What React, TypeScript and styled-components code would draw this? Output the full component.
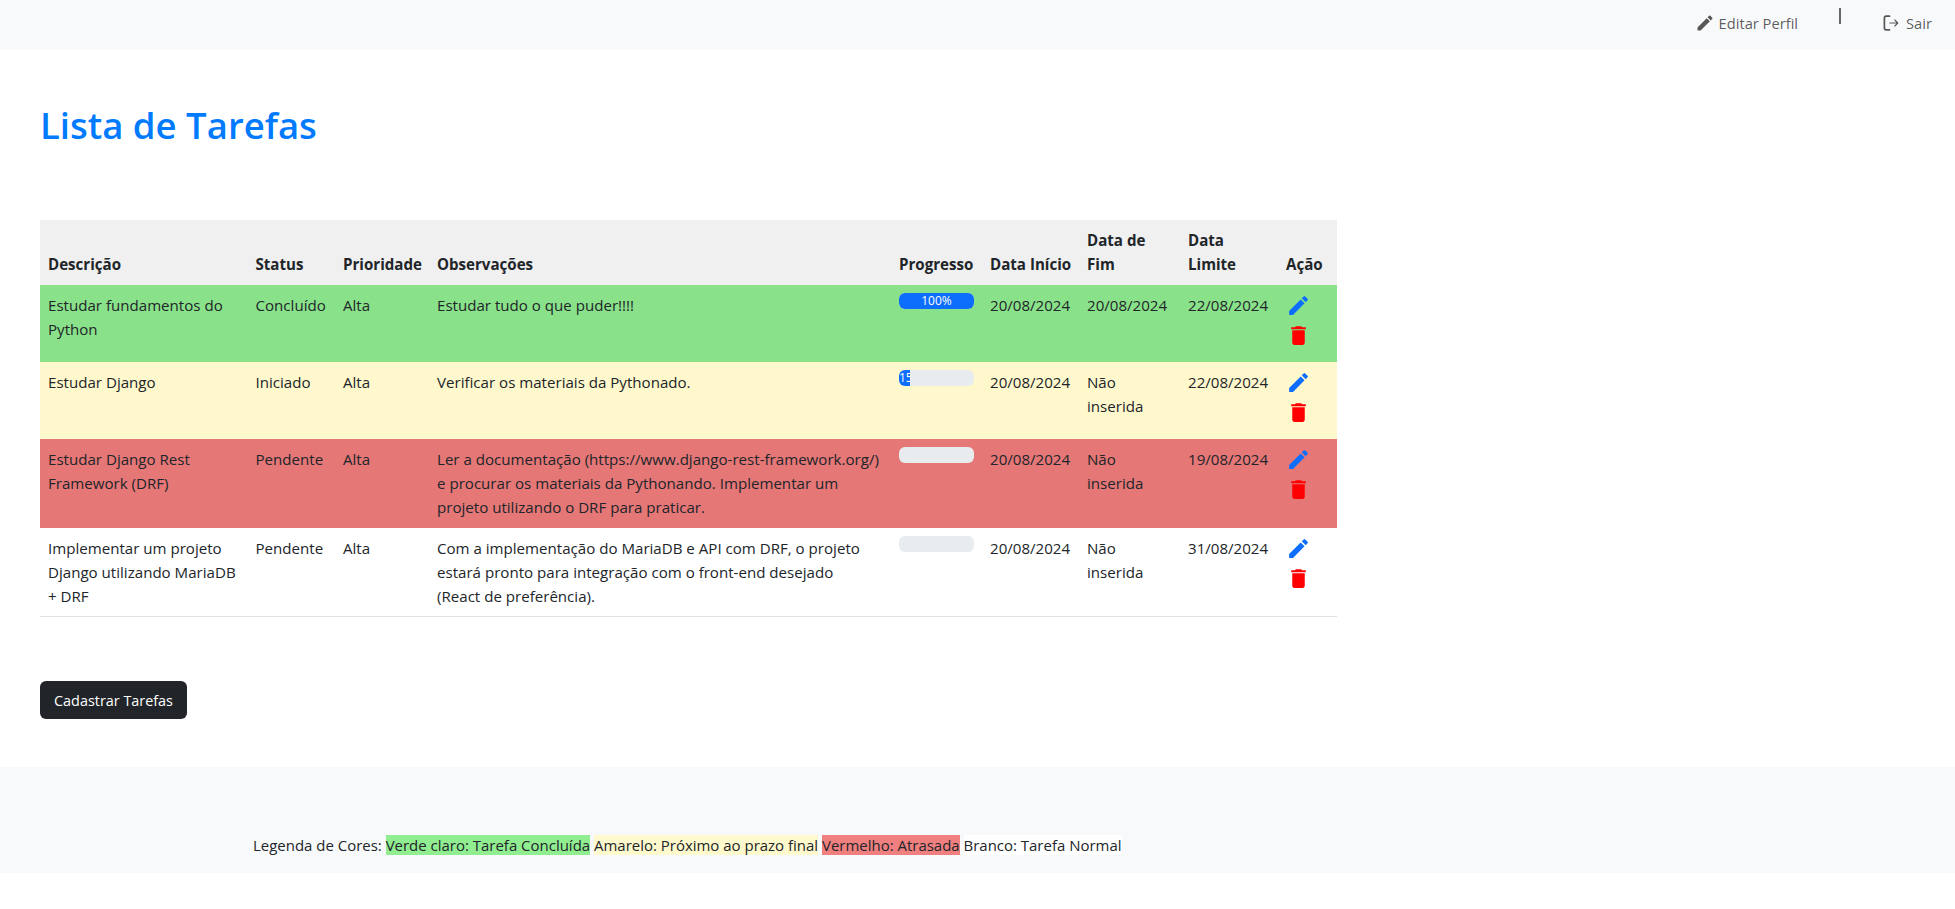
import React from "react";
import styled, { createGlobalStyle } from "styled-components";
import { MdEdit, MdDelete } from "react-icons/md";

const Global = createGlobalStyle`
  html, body { margin: 0; padding: 0; background: #fff; }
  body { font-family: "Open Sans", "Noto Sans", "Liberation Sans", sans-serif; font-size: 15px; line-height: 24px; color: #212529; }
`;

const Nav = styled.nav`
  height: 50px; background: #f8f9fa; display: flex; justify-content: flex-end; align-items: flex-start;
  padding-right: 23px; box-sizing: border-box;
`;
const NavLink = styled.a<{ $gap: number }>`
  display: flex; align-items: center; gap: ${p => p.$gap}px; height: 46px; color: rgba(0,0,0,.65); font-size: 14.7px; cursor: pointer;
  svg { display: block; }
`;
const Pipe = styled.span`
  width: 2px; height: 16px; background: #666; margin: 8px 42px 0 41px;
`;
const Main = styled.main`
  padding: 0 40px; 
`;
const Title = styled.h1`
  margin: 0; padding-top: 47px; height: 170px; box-sizing: border-box; font-size: 36.5px; line-height: 56px; font-weight: 600; color: #007bff;
`;
const Table = styled.table`
  border-collapse: collapse; table-layout: fixed; width: 1297px;
`;
const HeadCell = styled.th<{ $w: number; $nowrap?: boolean }>`
  width: ${p => p.$w}px; box-sizing: border-box; background: #f0f0f0; padding: 8px 8px 9px; text-align: left; vertical-align: bottom;
  font-weight: 700; font-size: 15.1px; line-height: 24px; white-space: ${p => (p.$nowrap ? "nowrap" : "normal")};
`;
const Row = styled.tr<{ $bg: string }>`
  background: ${p => p.$bg};
  border-bottom: 1px solid ${p => (p.$bg === "#fff" ? "#dee2e6" : "transparent")};
`;
const Cell = styled.td`
  padding: 8px; vertical-align: top; font-size: 15.1px; line-height: 24px; height: 60px;
`;
const Progress = styled.div`
  height: 16px; background: #e9ecef; border-radius: 6px; overflow: hidden; display: flex;
`;
const Bar = styled.div`
  background: #0d6efd; color: #fff; font-size: 12px; line-height: 16px; text-align: center; white-space: nowrap; overflow: hidden;
`;
const Actions = styled.div`
  display: flex; flex-direction: column; gap: 5px; align-items: flex-start;
  svg { display: block; }
`;
const Button = styled.button`
  display: block; margin: 64px 0 48px; width: 147px; height: 38px; border: 0; border-radius: 6px; background: #212529; color: #fff;
  font: 14.4px "Open Sans", sans-serif; cursor: pointer;
`;
const Footer = styled.footer`
  height: 106px; background: #f8f9fa; box-sizing: border-box; padding: 68px 0 0 253px; font-size: 14.97px; line-height: 21px; white-space: nowrap;
`;
const Legend = styled.span<{ $bg: string }>`
  background: ${p => p.$bg};
`;

const LogoutIcon = () => (
  <svg width="16" height="16" viewBox="0 0 16 16" fill="none" stroke="currentColor" strokeLinecap="round" strokeLinejoin="round">
    <path d="M6.5 1.2H3.2a1.8 1.8 0 0 0-1.8 1.8v10a1.8 1.8 0 0 0 1.8 1.8h3.3" strokeWidth="1.7" />
    <path d="M6.8 8h8M11.8 5l3 3-3 3" strokeWidth="1.1" />
  </svg>
);

const cols: [string, number, boolean][] = [
  ["Descrição", 207.5, true], ["Status", 87.5, true], ["Prioridade", 94, true], ["Observações", 462, true], ["Progresso", 91, true],
  ["Data Início", 97, true], ["Data de Fim", 101, false], ["Data Limite", 98, false], ["Ação", 59, true],
];

const rows = [
  { bg: "#89e28a", d: "Estudar fundamentos do Python", s: "Concluído", o: "Estudar tudo o que puder!!!!", p: 100, f: "20/08/2024", l: "22/08/2024" },
  { bg: "#fff8cd", d: "Estudar Django", s: "Iniciado", o: "Verificar os materiais da Pythonado.", p: 15, f: "Não inserida", l: "22/08/2024" },
  { bg: "#e57777", d: "Estudar Django Rest Framework (DRF)", s: "Pendente", o: "Ler a documentação (https://www.django-rest-framework.org/) e procurar os materiais da Pythonando. Implementar um projeto utilizando o DRF para praticar.", p: 0, f: "Não inserida", l: "19/08/2024" },
  { bg: "#fff", d: "Implementar um projeto Django utilizando MariaDB + DRF", s: "Pendente", o: "Com a implementação do MariaDB e API com DRF, o projeto estará pronto para integração com o front-end desejado (React\u00A0de preferência).", p: 0, f: "Não inserida", l: "31/08/2024" },
];

export default function App() {
  return (
    <>
      <Global />
      <Nav>
        <NavLink $gap={4}><MdEdit size={20} />Editar Perfil</NavLink>
        <Pipe />
        <NavLink $gap={7}><LogoutIcon />Sair</NavLink>
      </Nav>
      <Main>
        <Title>Lista de Tarefas</Title>
        <Table>
          <thead>
            <tr>{cols.map(([t, w, n]) => <HeadCell key={t} $w={w} $nowrap={n}>{t}</HeadCell>)}</tr>
          </thead>
          <tbody>
            {rows.map(r => (
              <Row key={r.d} $bg={r.bg}>
                <Cell>{r.d}</Cell>
                <Cell>{r.s}</Cell>
                <Cell>Alta</Cell>
                <Cell>{r.o}</Cell>
                <Cell>
                  <Progress>{r.p > 0 && <Bar style={{ width: `${r.p}%` }}>{r.p}%</Bar>}</Progress>
                </Cell>
                <Cell>20/08/2024</Cell>
                <Cell>{r.f}</Cell>
                <Cell>{r.l}</Cell>
                <Cell>
                  <Actions>
                    <MdEdit size={25} color="#0d6efd" />
                    <MdDelete size={25} color="#ff0000" />
                  </Actions>
                </Cell>
              </Row>
            ))}
          </tbody>
        </Table>
        <Button>Cadastrar Tarefas</Button>
      </Main>
      <Footer>
        Legenda de Cores: <Legend $bg="#90ee90">Verde claro: Tarefa Concluída</Legend>{" "}
        <Legend $bg="#fffacd">Amarelo: Próximo ao prazo final</Legend>{" "}
        <Legend $bg="#f08080">Vermelho: Atrasada</Legend>{" "}
        <Legend $bg="#fff">Branco: Tarefa Normal</Legend>
      </Footer>
    </>
  );
}
